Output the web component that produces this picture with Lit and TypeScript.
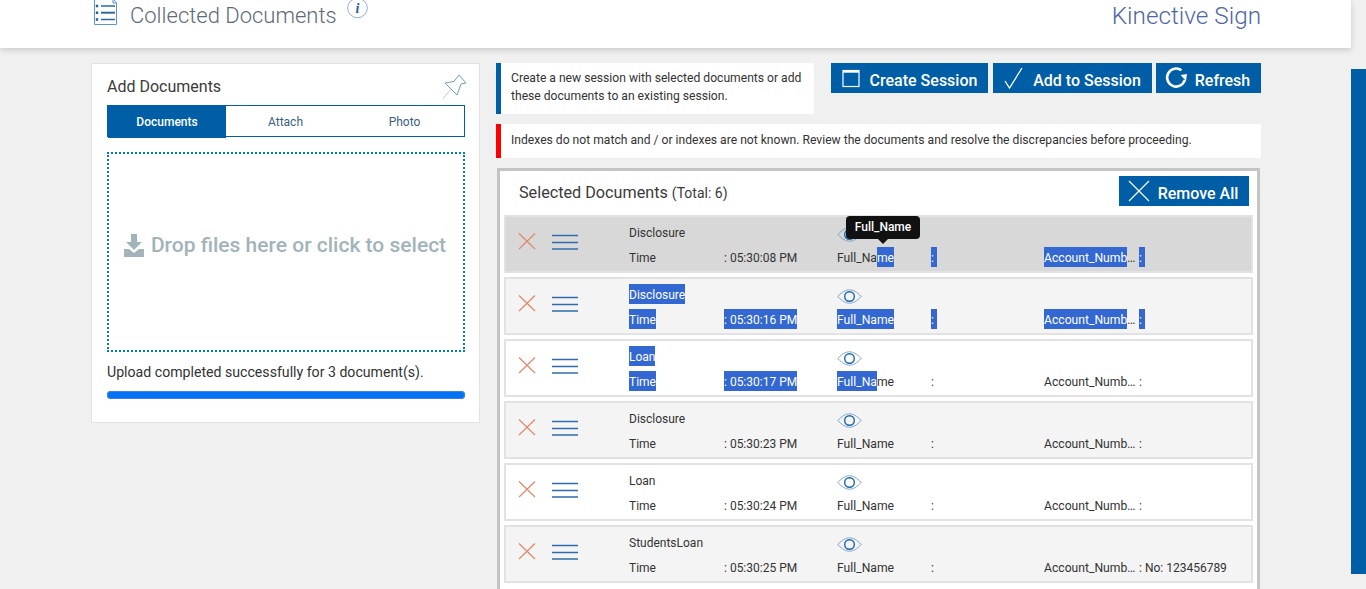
import { LitElement, html, css, svg } from "lit";
import { customElement } from "lit/decorators.js";

type Seg = string | [string];
interface Row {
  tone: string;
  name: Seg[];
  label: Seg[];
  time: Seg[];
  full: Seg[];
  colon1: Seg[];
  account: Seg[];
  colon2: Seg[];
  tip?: boolean;
}

const rows: Row[] = [
  { tone: "hover", name: ["Disclosure"], label: ["Time"], time: [": 05:30:08 PM"], full: ["Full_Na", ["me"]], colon1: [[": "]], account: [["Account_Numb"], "…"], colon2: [[": "]], tip: true },
  { tone: "alt", name: [["Disclosure"]], label: [["Time"]], time: [[": 05:30:16 PM"]], full: [["Full_Name"]], colon1: [[": "]], account: [["Account_Numb"], "…"], colon2: [[": "]] },
  { tone: "", name: [["Loan"]], label: [["Time"]], time: [[": 05:30:17 PM"]], full: [["Full_Na"], "me"], colon1: [": "], account: ["Account_Numb…"], colon2: [": "] },
  { tone: "alt", name: ["Disclosure"], label: ["Time"], time: [": 05:30:23 PM"], full: ["Full_Name"], colon1: [": "], account: ["Account_Numb…"], colon2: [": "] },
  { tone: "", name: ["Loan"], label: ["Time"], time: [": 05:30:24 PM"], full: ["Full_Name"], colon1: [": "], account: ["Account_Numb…"], colon2: [": "] },
  { tone: "alt", name: ["StudentsLoan"], label: ["Time"], time: [": 05:30:25 PM"], full: ["Full_Name"], colon1: [": "], account: ["Account_Numb…"], colon2: [": No: 123456789"] },
];

const eye = svg`<path d="M.8 8.5C5 3.8 9 1.8 12.5 1.8S20 3.8 24.2 8.5C20 13.2 16 15.2 12.5 15.2S5 13.2 .8 8.5Z" fill="none" stroke="#7fa6cb" stroke-width="1"/><circle cx="12.5" cy="8.5" r="4.8" fill="none" stroke="#1a66a8" stroke-width="1.4"/>`;

@customElement("app-root")
export class AppRoot extends LitElement {
  static styles = css`
    :host {
      display: flex;
      height: 589px;
      overflow: hidden;
      background: #f0f0f0;
      font-family: Roboto, "Liberation Sans", sans-serif;
      color: #333;
    }
    .page { width: 1351px; flex: none; }
    .rail { width: 15px; height: 505px; margin-top: 69px; background: #005ea6; flex: none; }
    header {
      height: 48px;
      background: #fff;
      box-shadow: 0 2px 6px rgba(0, 0, 0, 0.16);
      display: flex;
      align-items: flex-start;
      padding-left: 94px;
      padding-right: 90px;
      position: relative;
    }
    .doc { margin-right: 13px; flex: none; }
    h1 {
      margin: 0;
      font-size: 22px;
      font-weight: 300;
      line-height: 32px;
      color: #5c6b7a;
      white-space: nowrap;
    }
    .info { margin-left: 10px; flex: none; }
    .brand {
      margin-left: auto;
      font-size: 24.3px;
      font-weight: 300;
      line-height: 32px;
      color: #4f65a3;
    }
    main {
      display: flex;
      gap: 16px;
      padding: 15px 0 0 91px;
      align-items: flex-start;
    }
    .left {
      width: 389px;
      height: 360px;
      box-sizing: border-box;
      padding: 0 14px 0 15px;
      background: #fff;
      border: 1px solid #e2e2e2;
      flex: none;
    }
    .left-head {
      height: 41px;
      display: flex;
      align-items: flex-start;
      justify-content: space-between;
    }
    h2 {
      margin: 13px 0 0;
      font-size: 16px;
      font-weight: 400;
      line-height: 20px;
      color: #3a3a3a;
    }
    .pin { margin: 10px -3px 0 0; }
    .tabs {
      display: grid;
      grid-template-columns: 118px 119px 119px;
      height: 32px;
      box-sizing: border-box;
      border: 1px solid #005ea6;
      font-size: 12px;
      line-height: 32px;
      text-align: center;
      color: #3d5f85;
    }
    .tabs .on { background: #005ea6; color: #fff; font-weight: 500; }
    .drop {
      margin-top: 15px;
      height: 200px;
      box-sizing: border-box;
      border: 2px dotted #00829b;
      display: flex;
      align-items: center;
      justify-content: center;
      gap: 7px;
      font-size: 21px;
      font-weight: 500;
      color: #a2b3ba;
      white-space: nowrap;
      padding: 0 2px 14px 0;
    }
    .status { margin-top: 11px; font-size: 14.13px; line-height: 18px; color: #333; }
    .progress { margin-top: 10px; height: 8px; border-radius: 4px; background: #0073f5; box-shadow: inset 0 0 0 1px #3f84d8; }

    .right { width: 765px; flex: none; }
    .top { display: flex; align-items: flex-start; }
    .note {
      background: #fff;
      border-left: 5px solid #005ea6;
      box-sizing: border-box;
      font-size: 12.13px;
      line-height: 18px;
      padding: 6px 10px;
      color: #333;
    }
    .note.first { width: 318px; height: 51px; flex: none; }
    .note.err { margin-top: 10px; height: 34px; border-left-color: #f00; padding: 7px 10px; }
    .btns { display: flex; gap: 5px; margin-left: 17px; }
    .btn {
      height: 30px;
      display: flex;
      align-items: center;
      justify-content: center;
      background: #005ea6;
      color: #fff;
      font-size: 16px;
      font-weight: 500;
      box-sizing: border-box;
      white-space: nowrap;
    }
    .btn span { padding-top: 5px; }
    .b1 { width: 157px; gap: 10px; }
    .b2 { width: 159px; gap: 10px; }
    .b3 { width: 105px; gap: 7px; margin-left: -1px; padding-right: 3px; }
    .b4 { width: 130px; gap: 7px; padding-right: 2px; }
    .panel {
      margin: 10px 1px 0;
      height: 440px;
      background: #fff;
      border: 3px solid #c4c4c4;
      box-sizing: border-box;
      padding: 0 4px;
    }
    .panel-head { height: 44px; display: flex; align-items: flex-start; justify-content: space-between; padding: 5px 4px 0 15px; box-sizing: border-box; }
    .panel-title { font-size: 16.2px; line-height: 30px; color: #3a3a3a; margin-top: 2px; }
    .panel-title small { font-size: 14px; }
    .list { display: flex; flex-direction: column; gap: 4px; }
    .row {
      position: relative;
      height: 58px;
      box-sizing: border-box;
      border: 2px solid #e2e2e2;
      background: #fff;
      padding-top: 5px;
      display: grid;
      grid-template-columns: 123px 95px 113px 207px 1fr;
      grid-template-rows: 20px 20px;
      row-gap: 5px;
      font-size: 12px;
      line-height: 23px;
      color: #333;
      white-space: pre;
    }
    .row.alt { background: #f4f4f4; }
    .row.hover { background: #d8d8d8; }
    .acts { grid-row: 1 / 3; display: flex; align-items: flex-start; gap: 16px; padding: 10px 0 0 12px; }
    .eye { grid-column: 4; grid-row: 1; padding-top: 4px; }
    .eye svg { display: block; }
    .name { grid-column: 2; grid-row: 1; }
    .c-label { grid-column: 2; grid-row: 2; }
    .c-time { grid-column: 3; grid-row: 2; }
    .c-full { grid-column: 4; grid-row: 2; display: flex; }
    .c-acc { grid-column: 5; grid-row: 2; display: flex; }
    .k1 { width: 94px; flex: none; font-size: 12.15px; }
    .k2 { width: 95px; flex: none; font-size: 12.15px; }
    .hl { display: inline-block; height: 20px; background: #3367d1; color: #fff; }
    .tip {
      position: absolute;
      left: 340px;
      top: -1px;
      height: 23px;
      width: 74px;
      box-sizing: border-box;
      text-align: center;
      background: #111;
      color: #fff;
      border-radius: 4px;
      font-weight: 500;
      line-height: 23px;
    }
    .tip::after {
      content: "";
      position: absolute;
      left: 50%;
      bottom: -5px;
      margin-left: -5px;
      border: 5px solid transparent;
      border-bottom: 0;
      border-top-color: #111;
    }
  `;

  private seg(parts: Seg[]) {
    return parts.map((p) => (typeof p === "string" ? p : html`<span class="hl">${p[0]}</span>`));
  }

  private renderRow(r: Row) {
    return html`<div class="row ${r.tone}">
      <div class="acts">
        <svg width="18" height="18" viewBox="0 0 18 18"><path d="M1 1.5 17 17M17 1.5 1 17" stroke="#e0886a" stroke-width="1.2" fill="none"/></svg>
        <svg width="26" height="19" viewBox="0 0 26 19"><path d="M0 3.5H26M0 10.5H26M0 17H26" stroke="#2f6cab" stroke-width="1.4" fill="none"/></svg>
      </div>
      <div class="name">${this.seg(r.name)}</div>
      <div class="eye"><svg width="25" height="17" viewBox="0 0 25 17">${eye}</svg></div>
      <div class="c-label">${this.seg(r.label)}</div>
      <div class="c-time">${this.seg(r.time)}</div>
      <div class="c-full"><span class="k1">${this.seg(r.full)}</span><span>${this.seg(r.colon1)}</span></div>
      <div class="c-acc"><span class="k2">${this.seg(r.account)}</span><span>${this.seg(r.colon2)}</span></div>
      ${r.tip ? html`<div class="tip">Full_Name</div>` : null}
    </div>`;
  }

  render() {
    return html`
      <div class="page">
        <header>
          <svg class="doc" width="23" height="26" viewBox="0 0 23 26">
            <path d="M.5 -2V24.5H22.5V3L19 -1V3H22.5" fill="none" stroke="#5b97cf" stroke-width="1"/>
            <path d="M7 6H21M7 19.5H21" stroke="#2c6aa6" stroke-width="1.3" fill="none"/>
            <path d="M7 12.7H21" stroke="#2c6aa6" stroke-width="2" fill="none"/>
            <path d="M1.8 6H4.2M1.8 12.7H4.2M1.8 19.5H4.2" stroke="#1f5f9e" stroke-width="2.4" fill="none"/>
          </svg>
          <h1>Collected Documents</h1>
          <svg class="info" width="21" height="19" viewBox="0 0 21 19">
            <circle cx="10.5" cy="8" r="9.8" fill="#fff" stroke="#8fb3d4" stroke-width="1"/>
            <text x="10.5" y="13" text-anchor="middle" font-family="Liberation Serif" font-size="14" font-style="italic" font-weight="700" fill="#1f5f9e">i</text>
          </svg>
          <div class="brand">Kinective Sign</div>
        </header>
        <main>
          <section class="left">
            <div class="left-head">
              <h2>Add Documents</h2>
              <svg class="pin" width="25" height="26" viewBox="0 0 25 26">
                <path d="M16 1 23 9 18 10 14 21 2 9 11 7.5Z" fill="none" stroke="#6d9dcb" stroke-width="1"/>
                <path d="M7.5 15.5 0 25" stroke="#b7cfe6" stroke-width="1" fill="none"/>
              </svg>
            </div>
            <div class="tabs">
              <div class="on">Documents</div>
              <div>Attach</div>
              <div>Photo</div>
            </div>
            <div class="drop">
              <svg width="20" height="23" viewBox="0 0 20 23">
                <path d="M7 0H13V8H18L10 16 2 8H7Z" fill="#a2b3ba"/>
                <path d="M0 15H5L10 19 15 15H20V23H0Z" fill="#a2b3ba"/>
              </svg>
              <span>Drop files here or click to select</span>
            </div>
            <div class="status">Upload completed successfully for 3 document(s).</div>
            <div class="progress"></div>
          </section>
          <section class="right">
            <div class="top">
              <div class="note first">Create a new session with selected documents or add these documents to an existing session.</div>
              <div class="btns">
                <div class="btn b1">
                  <svg width="18" height="19" viewBox="0 0 18 19"><rect x="1" y="1.5" width="16" height="16" fill="none" stroke="#fff" stroke-width="1.2"/><path d="M1 2.5H17" stroke="#fff" stroke-width="2.4"/></svg>
                  <span>Create Session</span>
                </div>
                <div class="btn b2">
                  <svg width="19" height="22" viewBox="0 0 19 22"><path d="M1 14 5.5 21 18 1" fill="none" stroke="#fff" stroke-width="1.3"/></svg>
                  <span>Add to Session</span>
                </div>
                <div class="btn b3">
                  <svg width="24" height="24" viewBox="0 0 24 24"><path d="M17.5 4.3A9 9 0 1 0 20.8 14" fill="none" stroke="#fff" stroke-width="2.6"/><path d="M16.5 9 23 8 22 15Z" fill="#fff"/></svg>
                  <span>Refresh</span>
                </div>
              </div>
            </div>
            <div class="note err">Indexes do not match and / or indexes are not known. Review the documents and resolve the discrepancies before proceeding.</div>
            <div class="panel">
              <div class="panel-head">
                <div class="panel-title">Selected Documents <small>(Total: 6)</small></div>
                <div class="btn b4">
                  <svg width="23" height="23" viewBox="0 0 23 23"><path d="M1 1 21 21M21 1 1 21" stroke="#fff" stroke-width="1.2" fill="none"/></svg>
                  <span>Remove All</span>
                </div>
              </div>
              <div class="list">${rows.map((r) => this.renderRow(r))}</div>
            </div>
          </section>
        </main>
      </div>
      <div class="rail"></div>
    `;
  }
}
